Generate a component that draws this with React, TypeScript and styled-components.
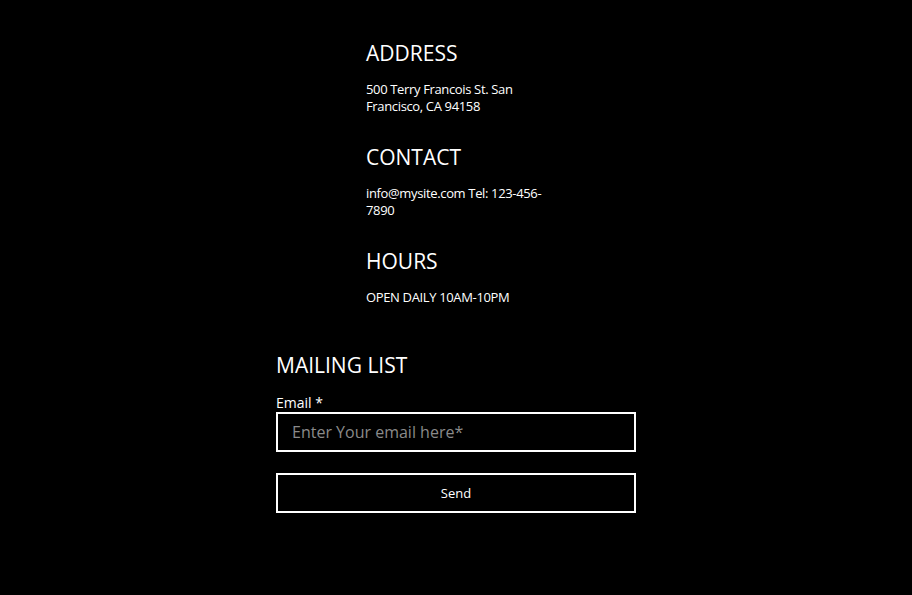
import React from "react";
import styled, { createGlobalStyle } from "styled-components";

const Global = createGlobalStyle`
  html, body { margin: 0; padding: 0; background: #000; }
  body { font-family: "Open Sans", "Noto Sans", sans-serif; color: #fff; }
  * { box-sizing: border-box; }
`;

const Page = styled.div`
  width: 912px;
  height: 595px;
  background: #000;
  display: flex;
  flex-direction: column;
  padding-top: 38px;
`;

const Info = styled.div`
  margin-left: 366px;
  width: 182px;
  display: flex;
  flex-direction: column;
`;

const Block = styled.section`
  display: flex;
  flex-direction: column;
  margin-bottom: 27px;
`;

const Heading = styled.h2`
  margin: 0 0 13px;
  font-size: 21px;
  font-weight: 400;
  line-height: 30px;
`;

const Text = styled.p`
  margin: 0;
  font-size: 13px;
  line-height: 17px;
  letter-spacing: -0.35px;
`;

const Mailing = styled.form`
  margin-left: 276px;
  margin-top: 17px;
  width: 360px;
  display: flex;
  flex-direction: column;
`;

const MailTitle = styled.h2`
  margin: 0 0 14px;
  font-size: 21px;
  font-weight: 400;
  line-height: 30px;
`;

const Label = styled.label`
  font-size: 14px;
  line-height: 18px;
`;

const Input = styled.input`
  width: 360px;
  height: 40px;
  border: 2px solid #fff;
  background: #000;
  color: #fff;
  padding: 0 14px;
  font-family: "Open Sans", "Noto Sans", sans-serif;
  font-size: 16px;
  outline: none;
  margin-bottom: 21px;
  &::placeholder { color: #8a8a8a; }
`;

const Button = styled.button`
  width: 360px;
  height: 40px;
  border: 2px solid #fff;
  background: #000;
  color: #fff;
  font-family: "Open Sans", "Noto Sans", sans-serif;
  font-size: 13px;
  cursor: pointer;
`;

export default function App() {
  return (
    <>
      <Global />
      <Page>
        <Info>
          <Block>
            <Heading>ADDRESS</Heading>
            <Text>500 Terry Francois St. San Francisco, CA 94158</Text>
          </Block>
          <Block>
            <Heading>CONTACT</Heading>
            <Text>info@mysite.com Tel: 123-456-7890</Text>
          </Block>
          <Block>
            <Heading>HOURS</Heading>
            <Text>OPEN DAILY 10AM-10PM</Text>
          </Block>
        </Info>
        <Mailing onSubmit={(e) => e.preventDefault()}>
          <MailTitle>MAILING LIST</MailTitle>
          <Label htmlFor="email">Email *</Label>
          <Input id="email" type="email" placeholder="Enter Your email here*" />
          <Button type="submit">Send</Button>
        </Mailing>
      </Page>
    </>
  );
}
